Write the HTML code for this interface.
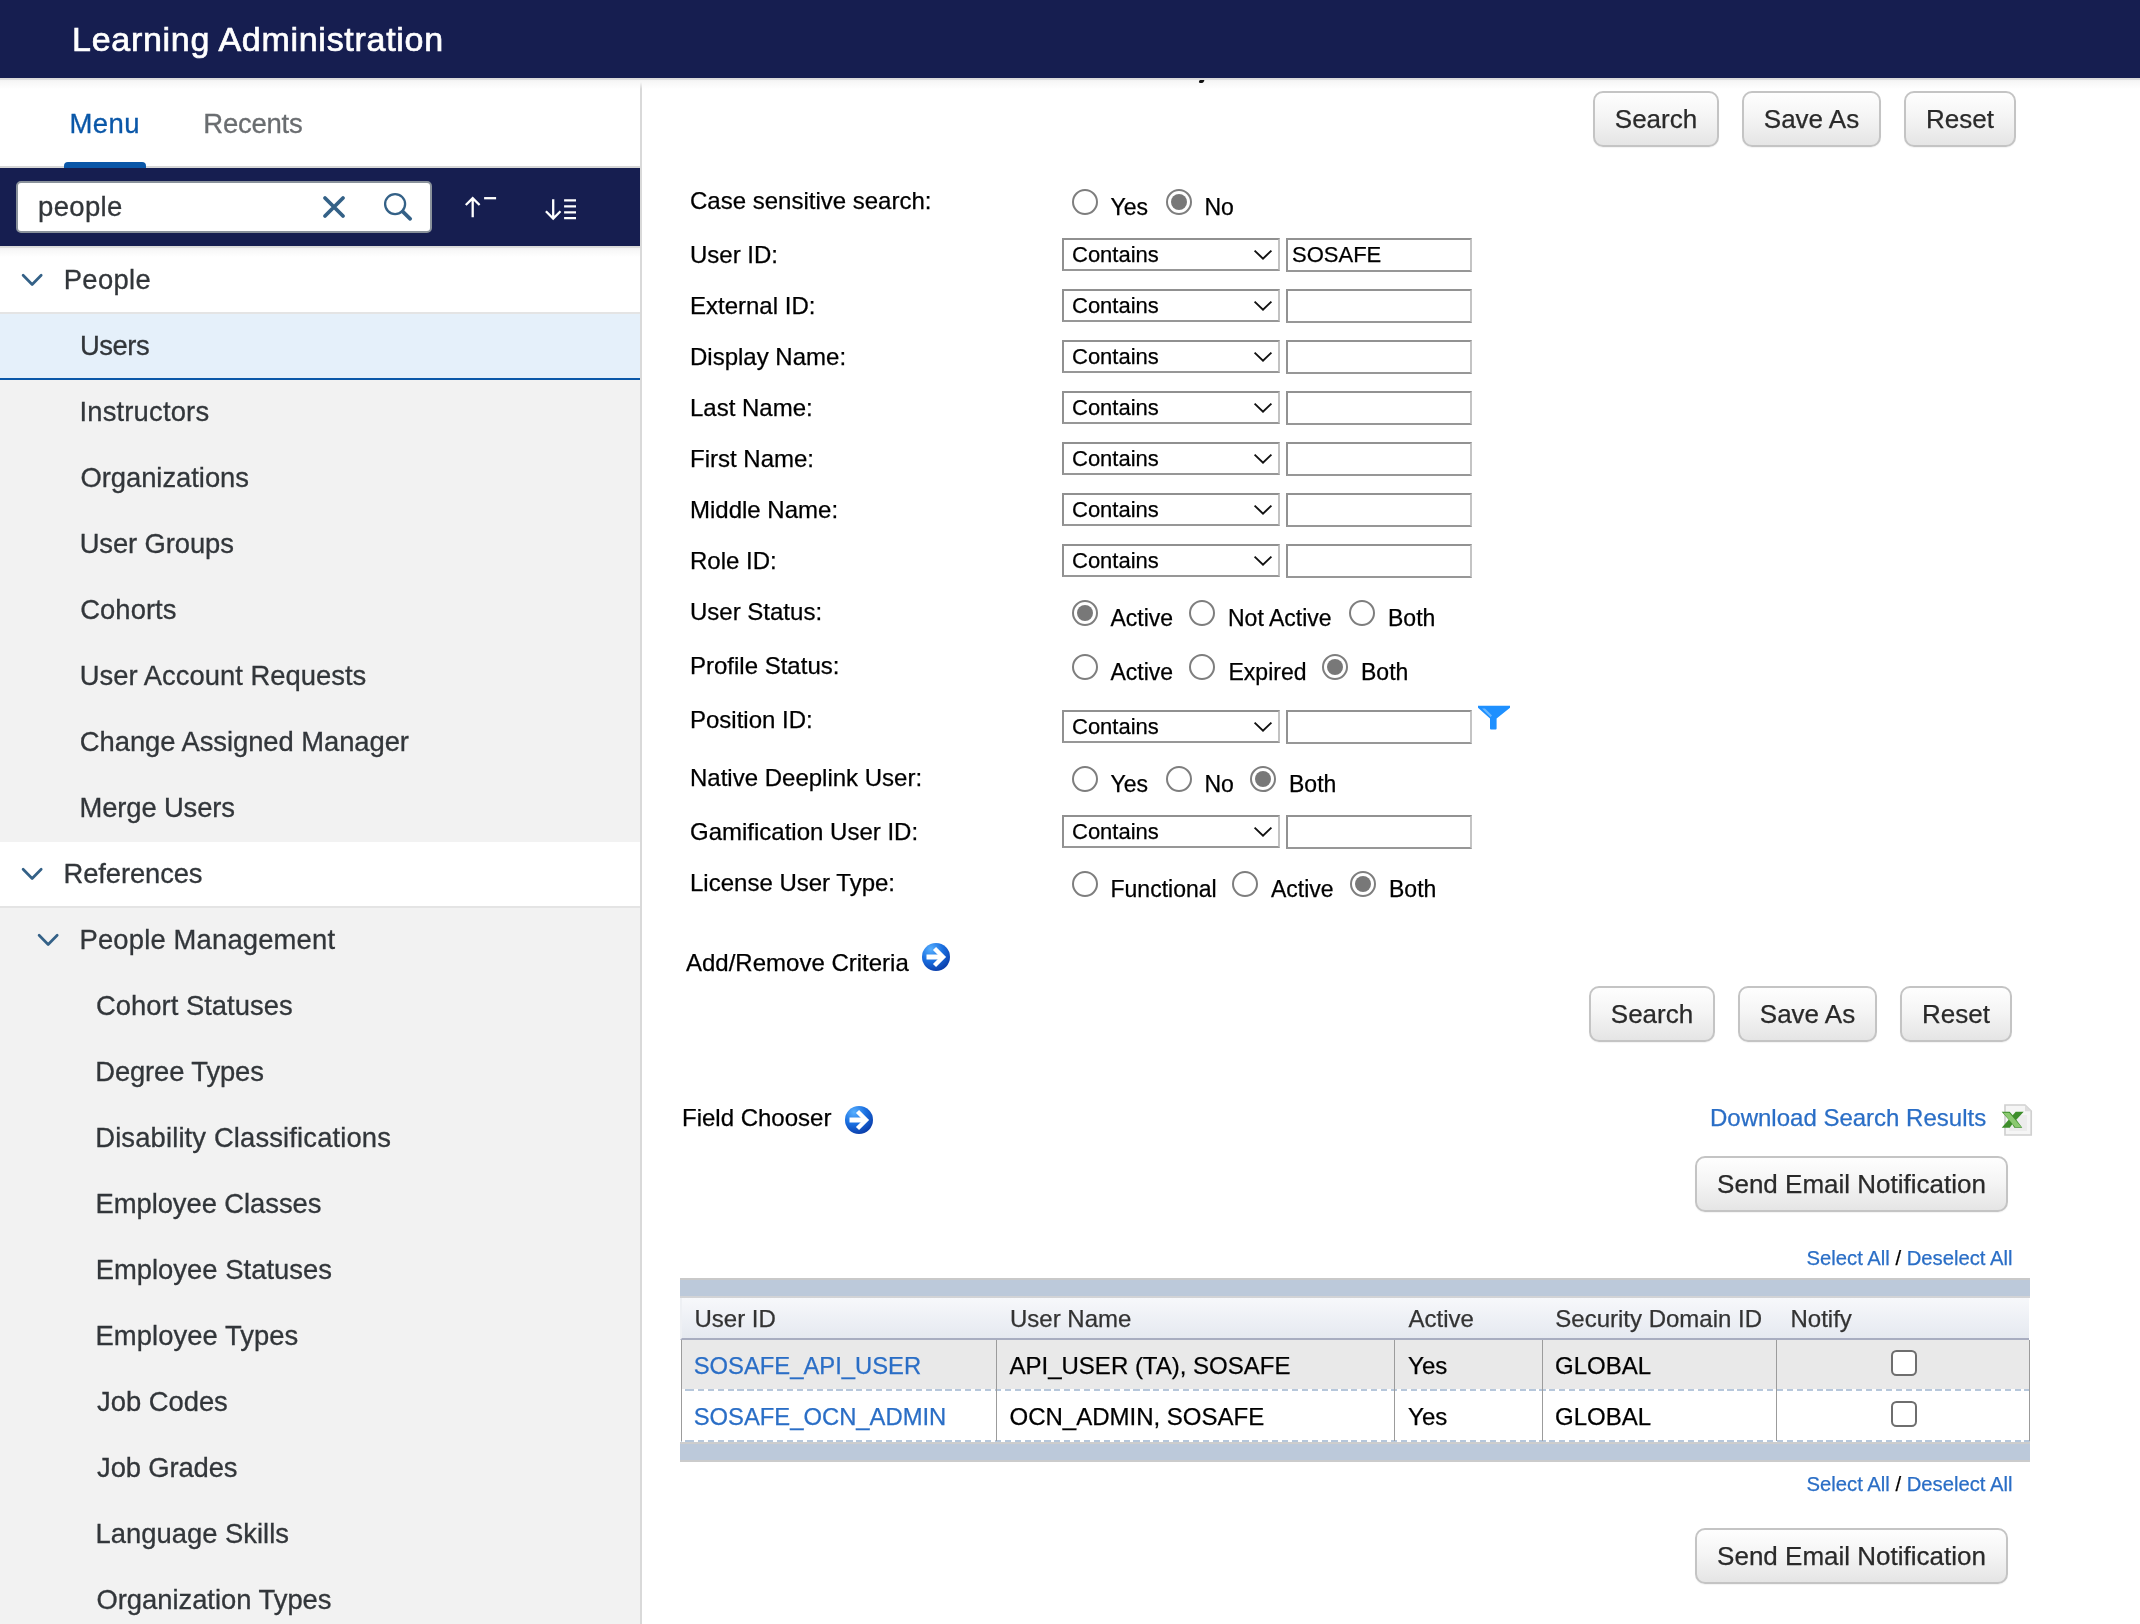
<!DOCTYPE html>
<html>
<head>
<meta charset="utf-8">
<title>Learning Administration</title>
<style>
*{box-sizing:border-box;margin:0;padding:0}
html,body{width:2140px;height:1624px;overflow:hidden;background:#fff}
body{font-family:"Liberation Sans",sans-serif;position:relative;color:#000;will-change:transform}
#hdr{position:absolute;left:0;top:0;width:2140px;height:78px;background:#161e50;z-index:5}
#hdr:after,#tool:after{content:"";position:absolute;left:0;top:100%;width:100%;height:11px;background:linear-gradient(#d7d7d7 0,#dedede 1.6px,#f3f3f3 2.2px,#f7f7f7 4px,rgba(255,255,255,0) 11px)}
#hdr .t{position:absolute;left:72px;top:0;height:78px;line-height:78px;font-size:34px;color:#fff;letter-spacing:.72px;white-space:nowrap;-webkit-text-stroke:.7px #fff}
#side{position:absolute;left:0;top:78px;width:640px;height:1546px;background:#f2f2f2;overflow:hidden}
#sideb{position:absolute;left:640px;top:78px;width:2px;height:1546px;background:#d9d9d9}
#tabs{position:absolute;left:0;top:0;width:640px;height:90px;background:#fff;border-bottom:2px solid #d6d6d6}
#tabs span{position:absolute;top:0;line-height:92px;font-size:27.5px;white-space:nowrap;-webkit-text-stroke:.3px}
#tabs .u{position:absolute;left:64px;top:84px;width:82px;height:6px;background:#0a57a8;border-radius:4px 4px 0 0}
#tool{position:absolute;left:0;top:90px;width:640px;height:78px;background:#161e50;z-index:2}
#sbox{position:absolute;left:16px;top:13px;width:416px;height:52px;background:#fff;border:2px solid #8a929b;border-radius:5px}
#sbox .tx{position:absolute;left:20px;top:0;line-height:48px;font-size:27.5px;color:#32363a;letter-spacing:.35px;-webkit-text-stroke:.3px}
#tool>svg{position:absolute;left:0;top:0}
.row{position:absolute;left:0;width:640px;height:66px;font-size:27.4px;color:#32363a;line-height:63px;white-space:nowrap;-webkit-text-stroke:.3px}
.row.w{background:#fff;border-bottom:2px solid #e4e4e4}
.row.sel{background:#e5f0fa;border-bottom:2px solid #0a57a8}
.row span{position:absolute;top:0}
.row svg{position:absolute;top:0;left:0}
#main{position:absolute;left:642px;top:78px;width:1498px;height:1546px;background:#fff;overflow:hidden}
#main>*{position:absolute}
.t{line-height:30px;white-space:nowrap;-webkit-text-stroke:.25px}
.btn{height:56px;border:2px solid #c4c4c4;border-radius:10px;background:linear-gradient(#fefefe 0%,#f5f5f5 45%,#e5e5e5 100%);font-size:26px;line-height:53px;text-align:center;color:#2a2a2a;white-space:nowrap;-webkit-text-stroke:.25px;box-shadow:0 1px 1px rgba(0,0,0,.05)}
.sel2{width:218px;height:33px;border:2px solid #909090;border-right-color:#c2c2c2;border-bottom-color:#979797;background:#fff;font-size:22px;line-height:29px;padding-left:8px;white-space:nowrap;-webkit-text-stroke:.25px}
.sel2 svg{position:absolute;left:188.3px;top:8px}
.inp{width:186px;height:34px;border:2px solid #929292;border-right-color:#c4c4c4;border-bottom-color:#979797;background:#fff;font-size:22px;line-height:29px;padding-left:4px;white-space:nowrap;-webkit-text-stroke:.25px}
.rad{width:26px;height:26px;border-radius:50%;border:2px solid #7e7e7e;background:#fff}
.rad.on:after{content:"";position:absolute;left:3px;top:3px;width:16px;height:16px;border-radius:50%;background:#787878}
.lnk{color:#2a6ec6}
.bar{background:#bcc9da}
.cb{width:26px;height:26px;border:2px solid #6e6e6e;border-radius:5.5px;background:#fff}
</style>
</head>
<body>
<div id="hdr"><div class="t">Learning Administration</div></div>
<div id="side">
<div id="tabs"><span style="left:69.5px;color:#0a57a8;letter-spacing:.45px">Menu</span><span style="left:203.3px;color:#6a6d70;letter-spacing:-.25px">Recents</span><div class="u"></div></div>
<div id="tool"><div id="sbox"><span class="tx">people</span></div><svg width="640" height="78" viewBox="0 0 640 78">
<g stroke="#346187" fill="none" stroke-linecap="round">
<path d="M325 30 L343 48 M343 30 L325 48" stroke-width="3.8"/>
<circle cx="395.1" cy="36.05000000000001" r="10" stroke-width="2.3"/>
<path d="M402.8 43.599999999999994 L410.2 50.80000000000001" stroke-width="3.7"/>
</g>
<g stroke="#fff" fill="none" stroke-width="2.3">
<path d="M472.7 30.599999999999994 V49.19999999999999 M465.8 37 L472.7 30.099999999999994 L479.6 37"/>
<path d="M484.1 30.19999999999999 H496.1"/>
<path d="M553.2 31.19999999999999 V50.599999999999994 M545.9 43.19999999999999 L553.2 50.5 L560.5 43.19999999999999"/>
<path d="M564.1 32.400000000000006 H576 M564.1 38.30000000000001 H576 M564.1 44.30000000000001 H576 M564.1 50.19999999999999 H576"/>
</g></svg></div>
<div class="row w" style="top:170px"><svg width="80" height="66" viewBox="0 0 80 66"><path d="M23.1 27.2 L32.15 36.5 L41.2 27.2" fill="none" stroke="#346187" stroke-width="2.7" stroke-linecap="round" stroke-linejoin="round"/></svg><span style="left:63.67px;letter-spacing:0.360px">People</span></div>
<div class="row sel" style="top:236px"><span style="left:79.96px;letter-spacing:-0.452px">Users</span></div>
<div class="row " style="top:302px"><span style="left:79.44px;letter-spacing:0.181px">Instructors</span></div>
<div class="row " style="top:368px"><span style="left:80.41px;letter-spacing:-0.035px">Organizations</span></div>
<div class="row " style="top:434px"><span style="left:79.66px;letter-spacing:-0.109px">User Groups</span></div>
<div class="row " style="top:500px"><span style="left:80.26px;letter-spacing:0.048px">Cohorts</span></div>
<div class="row " style="top:566px"><span style="left:79.66px;letter-spacing:0.021px">User Account Requests</span></div>
<div class="row " style="top:632px"><span style="left:79.86px;letter-spacing:-0.061px">Change Assigned Manager</span></div>
<div class="row " style="top:698px"><span style="left:79.54px;letter-spacing:-0.135px">Merge Users</span></div>
<div class="row w" style="top:764px"><svg width="80" height="66" viewBox="0 0 80 66"><path d="M23.1 27.2 L32.15 36.5 L41.2 27.2" fill="none" stroke="#346187" stroke-width="2.7" stroke-linecap="round" stroke-linejoin="round"/></svg><span style="left:63.57px;letter-spacing:-0.122px">References</span></div>
<div class="row " style="top:830px"><svg width="80" height="66" viewBox="0 0 80 66"><path d="M39.1 27.2 L48.15 36.5 L57.2 27.2" fill="none" stroke="#346187" stroke-width="2.7" stroke-linecap="round" stroke-linejoin="round"/></svg><span style="left:79.54px;letter-spacing:0.170px">People Management</span></div>
<div class="row " style="top:896px"><span style="left:95.96px;letter-spacing:0.023px">Cohort Statuses</span></div>
<div class="row " style="top:962px"><span style="left:95.24px;letter-spacing:-0.124px">Degree Types</span></div>
<div class="row " style="top:1028px"><span style="left:95.24px;letter-spacing:0.137px">Disability Classifications</span></div>
<div class="row " style="top:1094px"><span style="left:95.54px;letter-spacing:-0.064px">Employee Classes</span></div>
<div class="row " style="top:1160px"><span style="left:95.64px;letter-spacing:0.020px">Employee Statuses</span></div>
<div class="row " style="top:1226px"><span style="left:95.54px;letter-spacing:0.051px">Employee Types</span></div>
<div class="row " style="top:1292px"><span style="left:97.11px;letter-spacing:-0.030px">Job Codes</span></div>
<div class="row " style="top:1358px"><span style="left:97.11px;letter-spacing:-0.142px">Job Grades</span></div>
<div class="row " style="top:1424px"><span style="left:95.54px;letter-spacing:0.002px">Language Skills</span></div>
<div class="row " style="top:1490px"><span style="left:96.41px;letter-spacing:-0.022px">Organization Types</span></div>
</div>
<div id="sideb"></div>
<div id="main">
<div style="left:557.3px;top:1.7px;width:5px;height:2.6px;background:#111;border-radius:1px 1px 2.5px 3px;transform:skewX(-25deg);z-index:9"></div>
<div class="btn" style="left:951px;top:13px;width:126px">Search</div>
<div class="btn" style="left:1100px;top:13px;width:139px">Save As</div>
<div class="btn" style="left:1262px;top:13px;width:112px">Reset</div>
<div class="t" style="left:48px;top:108px;font-size:24px">Case sensitive search:</div>
<div class="rad" style="left:430px;top:111px"></div>
<div class="t" style="left:468.5px;top:114px;font-size:23px">Yes</div>
<div class="rad on" style="left:524px;top:111px"></div>
<div class="t" style="left:562.5px;top:114px;font-size:23px">No</div>
<div class="t" style="left:48px;top:162px;font-size:24px">User ID:</div>
<div class="sel2" style="left:420px;top:160px">Contains<svg width="22" height="14" viewBox="0 0 22 14"><path d="M2.6 2.6 L11 10.6 L19.4 2.6" fill="none" stroke="#111" stroke-width="1.9" stroke-linecap="butt" stroke-linejoin="miter"/></svg></div>
<div class="inp" style="left:644px;top:160px">SOSAFE</div>
<div class="t" style="left:48px;top:213px;font-size:24px">External ID:</div>
<div class="sel2" style="left:420px;top:211px">Contains<svg width="22" height="14" viewBox="0 0 22 14"><path d="M2.6 2.6 L11 10.6 L19.4 2.6" fill="none" stroke="#111" stroke-width="1.9" stroke-linecap="butt" stroke-linejoin="miter"/></svg></div>
<div class="inp" style="left:644px;top:211px"></div>
<div class="t" style="left:48px;top:264px;font-size:24px">Display Name:</div>
<div class="sel2" style="left:420px;top:262px">Contains<svg width="22" height="14" viewBox="0 0 22 14"><path d="M2.6 2.6 L11 10.6 L19.4 2.6" fill="none" stroke="#111" stroke-width="1.9" stroke-linecap="butt" stroke-linejoin="miter"/></svg></div>
<div class="inp" style="left:644px;top:262px"></div>
<div class="t" style="left:48px;top:315px;font-size:24px">Last Name:</div>
<div class="sel2" style="left:420px;top:313px">Contains<svg width="22" height="14" viewBox="0 0 22 14"><path d="M2.6 2.6 L11 10.6 L19.4 2.6" fill="none" stroke="#111" stroke-width="1.9" stroke-linecap="butt" stroke-linejoin="miter"/></svg></div>
<div class="inp" style="left:644px;top:313px"></div>
<div class="t" style="left:48px;top:366px;font-size:24px">First Name:</div>
<div class="sel2" style="left:420px;top:364px">Contains<svg width="22" height="14" viewBox="0 0 22 14"><path d="M2.6 2.6 L11 10.6 L19.4 2.6" fill="none" stroke="#111" stroke-width="1.9" stroke-linecap="butt" stroke-linejoin="miter"/></svg></div>
<div class="inp" style="left:644px;top:364px"></div>
<div class="t" style="left:48px;top:417px;font-size:24px">Middle Name:</div>
<div class="sel2" style="left:420px;top:415px">Contains<svg width="22" height="14" viewBox="0 0 22 14"><path d="M2.6 2.6 L11 10.6 L19.4 2.6" fill="none" stroke="#111" stroke-width="1.9" stroke-linecap="butt" stroke-linejoin="miter"/></svg></div>
<div class="inp" style="left:644px;top:415px"></div>
<div class="t" style="left:48px;top:468px;font-size:24px">Role ID:</div>
<div class="sel2" style="left:420px;top:466px">Contains<svg width="22" height="14" viewBox="0 0 22 14"><path d="M2.6 2.6 L11 10.6 L19.4 2.6" fill="none" stroke="#111" stroke-width="1.9" stroke-linecap="butt" stroke-linejoin="miter"/></svg></div>
<div class="inp" style="left:644px;top:466px"></div>
<div class="t" style="left:48px;top:519px;font-size:24px">User Status:</div>
<div class="rad on" style="left:430px;top:522px"></div>
<div class="t" style="left:468.5px;top:525px;font-size:23px">Active</div>
<div class="rad" style="left:547px;top:522px"></div>
<div class="t" style="left:586px;top:525px;font-size:23px">Not Active</div>
<div class="rad" style="left:707px;top:522px"></div>
<div class="t" style="left:746px;top:525px;font-size:23px">Both</div>
<div class="t" style="left:48px;top:573px;font-size:24px">Profile Status:</div>
<div class="rad" style="left:430px;top:576px"></div>
<div class="t" style="left:468.5px;top:579px;font-size:23px">Active</div>
<div class="rad" style="left:547px;top:576px"></div>
<div class="t" style="left:586.5px;top:579px;font-size:23px">Expired</div>
<div class="rad on" style="left:680px;top:576px"></div>
<div class="t" style="left:719px;top:579px;font-size:23px">Both</div>
<div class="t" style="left:48px;top:627px;font-size:24px">Position ID:</div>
<div class="sel2" style="left:420px;top:632px">Contains<svg width="22" height="14" viewBox="0 0 22 14"><path d="M2.6 2.6 L11 10.6 L19.4 2.6" fill="none" stroke="#111" stroke-width="1.9" stroke-linecap="butt" stroke-linejoin="miter"/></svg></div>
<div class="inp" style="left:644px;top:632px"></div>
<svg width="34" height="26" viewBox="0 0 34 26" style="left:835px;top:627px;filter:blur(.5px)"><path d="M1 .7 H33 V2.8 L19.6 13.4 V23.6 Q19.6 24.6 18.6 24.6 H14 Q13 24.6 13 23.6 V13.4 L1 2.8 Z" fill="#1e90ff"/><path d="M5 3.5 L8 3.5 L15 10.5 L13.5 12 Z" fill="#7dc0ff" opacity=".8"/></svg>
<div class="t" style="left:48px;top:685px;font-size:24px">Native Deeplink User:</div>
<div class="rad" style="left:430px;top:688px"></div>
<div class="t" style="left:468.5px;top:691px;font-size:23px">Yes</div>
<div class="rad" style="left:524px;top:688px"></div>
<div class="t" style="left:562.5px;top:691px;font-size:23px">No</div>
<div class="rad on" style="left:608px;top:688px"></div>
<div class="t" style="left:647px;top:691px;font-size:23px">Both</div>
<div class="t" style="left:48px;top:739px;font-size:24px">Gamification User ID:</div>
<div class="sel2" style="left:420px;top:737px">Contains<svg width="22" height="14" viewBox="0 0 22 14"><path d="M2.6 2.6 L11 10.6 L19.4 2.6" fill="none" stroke="#111" stroke-width="1.9" stroke-linecap="butt" stroke-linejoin="miter"/></svg></div>
<div class="inp" style="left:644px;top:737px"></div>
<div class="t" style="left:48px;top:790px;font-size:24px">License User Type:</div>
<div class="rad" style="left:430px;top:793px"></div>
<div class="t" style="left:468.5px;top:796px;font-size:23px">Functional</div>
<div class="rad" style="left:590px;top:793px"></div>
<div class="t" style="left:629px;top:796px;font-size:23px">Active</div>
<div class="rad on" style="left:708px;top:793px"></div>
<div class="t" style="left:747px;top:796px;font-size:23px">Both</div>
<div class="t" style="left:44px;top:870px;font-size:24px">Add/Remove Criteria</div>
<svg width="30" height="30" viewBox="0 0 30 30" style="left:279px;top:864px;filter:blur(.55px)"><defs><radialGradient id="g1" cx="32%" cy="22%" r="85%"><stop offset="0" stop-color="#58b0ff"/><stop offset=".5" stop-color="#1a6fe0"/><stop offset="1" stop-color="#0a3aa6"/></radialGradient></defs><circle cx="15" cy="15" r="14" fill="url(#g1)"/><path d="M5.5 15 H20" stroke="#fff" stroke-width="5" fill="none"/><path d="M13.5 6.5 L22 15 L13.5 23.5" fill="none" stroke="#fff" stroke-width="4.4" stroke-linejoin="miter"/></svg>
<div class="btn" style="left:947px;top:908px;width:126px">Search</div>
<div class="btn" style="left:1096px;top:908px;width:139px">Save As</div>
<div class="btn" style="left:1258px;top:908px;width:112px">Reset</div>
<div class="t" style="left:40px;top:1025px;font-size:24px">Field Chooser</div>
<svg width="30" height="30" viewBox="0 0 30 30" style="left:202px;top:1026.6px;filter:blur(.55px)"><defs><radialGradient id="g2" cx="32%" cy="22%" r="85%"><stop offset="0" stop-color="#58b0ff"/><stop offset=".5" stop-color="#1a6fe0"/><stop offset="1" stop-color="#0a3aa6"/></radialGradient></defs><circle cx="15" cy="15" r="14" fill="url(#g2)"/><path d="M5.5 15 H20" stroke="#fff" stroke-width="5" fill="none"/><path d="M13.5 6.5 L22 15 L13.5 23.5" fill="none" stroke="#fff" stroke-width="4.4" stroke-linejoin="miter"/></svg>
<div class="t" style="left:1068px;top:1025px;font-size:24px;color:#2a6ec6">Download Search Results</div>
<svg width="34" height="34" viewBox="0 0 34 34" style="left:1358px;top:1025px;filter:blur(.5px)"><path d="M5 2 H25 L31.2 8.2 V32 H5 Z" fill="#f5f5f5" stroke="#d0d0d0" stroke-width="1.7"/><path d="M25 2 V8.2 H31.2 Z" fill="#dcdcdc"/><path d="M9 12 H27 V28 H9 Z" fill="#ececec"/><g transform="translate(1.7,8.7)"><path d="M0 0 H8 L11 3.6 L14 0 H22 L14.6 8 L20.6 16 H12.6 L10.6 12.6 L8 16 H0 L7 8 Z" fill="#3e8e2c"/><path d="M1.5 1 H7.5 L19.6 15.2 H13.4 Z" fill="#93cf78" opacity=".9"/></g></svg>
<div class="btn" style="left:1053px;top:1078px;width:313px">Send Email Notification</div>
<div class="t" style="left:1164.5px;top:1165px;font-size:20.25px"><span class="lnk">Select All</span> / <span class="lnk">Deselect All</span></div>
<div class="bar" style="left:38px;top:1200px;width:1350px;height:20px;border-top:2px solid #c9c9c9;border-bottom:2px solid #d2d3d6"></div>
<div style="left:38px;top:1220px;width:1349.3px;height:42.2px;background:linear-gradient(#f7f8fb,#e5e9f0);border-bottom:2.1px solid #a8adc0;border-left:2px solid #eef0f4"></div>
<div class="t" style="left:52.5px;top:1226px;font-size:24px;color:#333">User ID</div>
<div class="t" style="left:368px;top:1226px;font-size:24px;color:#333">User Name</div>
<div class="t" style="left:766.5px;top:1226px;font-size:24px;color:#333">Active</div>
<div class="t" style="left:913.3px;top:1226px;font-size:24px;color:#333">Security Domain ID</div>
<div class="t" style="left:1148.5px;top:1226px;font-size:24px;color:#333">Notify</div>
<div style="left:39px;top:1262.2px;width:1349px;height:49.2px;background:#e9e9e9"></div>
<div style="left:39px;top:1311.3px;width:1349px;height:1.9px;background:repeating-linear-gradient(90deg,#b6c7db 0,#b6c7db 6.2px,rgba(255,255,255,0) 6.2px,rgba(255,255,255,0) 9.9px) 7px 0"></div>
<div style="left:39px;top:1362.2px;width:1349px;height:1.9px;background:repeating-linear-gradient(90deg,#b6c7db 0,#b6c7db 6.2px,rgba(255,255,255,0) 6.2px,rgba(255,255,255,0) 9.9px) 7px 0"></div>
<div style="left:38.9px;top:1262.2px;width:1.45px;height:100.5px;background:#9c9c9c"></div>
<div style="left:353.5px;top:1262.2px;width:1.45px;height:100.5px;background:#9c9c9c"></div>
<div style="left:751.5px;top:1262.2px;width:1.45px;height:100.5px;background:#9c9c9c"></div>
<div style="left:899.6px;top:1262.2px;width:1.45px;height:100.5px;background:#9c9c9c"></div>
<div style="left:1133.7px;top:1262.2px;width:1.45px;height:100.5px;background:#9c9c9c"></div>
<div style="left:1386.7px;top:1262.2px;width:1.45px;height:100.5px;background:#9c9c9c"></div>
<div class="t" style="left:51.7px;top:1273px;font-size:23.8px;color:#2a6ec6">SOSAFE_API_USER</div>
<div class="t" style="left:367.5px;top:1273px;font-size:24px">API_USER (TA), SOSAFE</div>
<div class="t" style="left:766.1px;top:1273px;font-size:24px">Yes</div>
<div class="t" style="left:913.1px;top:1273px;font-size:24px">GLOBAL</div>
<div class="cb" style="left:1249px;top:1272px"></div>
<div class="t" style="left:51.7px;top:1324px;font-size:23.8px;color:#2a6ec6">SOSAFE_OCN_ADMIN</div>
<div class="t" style="left:367.5px;top:1324px;font-size:24px">OCN_ADMIN, SOSAFE</div>
<div class="t" style="left:766.1px;top:1324px;font-size:24px">Yes</div>
<div class="t" style="left:913.1px;top:1324px;font-size:24px">GLOBAL</div>
<div class="cb" style="left:1249px;top:1323px"></div>
<div class="bar" style="left:38px;top:1364px;width:1350px;height:20px;border-top:2px solid #cdcdcd;border-bottom:2px solid #cbcbcb"></div>
<div class="t" style="left:1164.5px;top:1391px;font-size:20.25px"><span class="lnk">Select All</span> / <span class="lnk">Deselect All</span></div>
<div class="btn" style="left:1053px;top:1450px;width:313px">Send Email Notification</div>
</div>
</body>
</html>
